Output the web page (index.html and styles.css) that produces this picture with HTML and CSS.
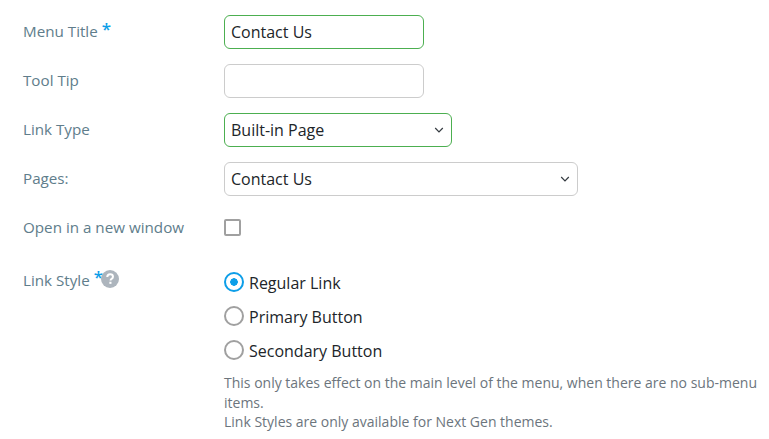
FILE: index.html
```html
<!DOCTYPE html>
<html lang="en">
<head>
    <meta charset="UTF-8">
    <title>Menu Item</title>
    <link rel="stylesheet" href="styles.css">
</head>
<body>
    <form class="menu-form">
        <div class="form-row">
            <label class="field-label">Menu Title <span class="required">*</span></label>
            <div class="text-input valid input-short">Contact Us</div>
        </div>
        <div class="form-row">
            <label class="field-label">Tool Tip</label>
            <div class="text-input input-short"></div>
        </div>
        <div class="form-row">
            <label class="field-label">Link Type</label>
            <div class="text-input valid select-box input-medium">
                Built-in Page
                <svg class="chevron" width="10" height="6" viewBox="0 0 10 6"><path d="M1.2 1l3.8 3.8L8.8 1" fill="none" stroke="#343a40" stroke-width="1.2"/></svg>
            </div>
        </div>
        <div class="form-row">
            <label class="field-label">Pages:</label>
            <div class="text-input select-box input-long">
                Contact Us
                <svg class="chevron" width="10" height="6" viewBox="0 0 10 6"><path d="M1.2 1l3.8 3.8L8.8 1" fill="none" stroke="#343a40" stroke-width="1.2"/></svg>
            </div>
        </div>
        <div class="form-row checkbox-row">
            <label class="field-label">Open in a new window</label>
            <span class="checkbox"></span>
        </div>
        <div class="form-row style-row">
            <label class="field-label">Link Style <span class="required required-tight">*</span><svg class="help-icon" width="18" height="18" viewBox="0 0 17 17"><circle cx="8.5" cy="8.5" r="8.5" fill="#adb5bd"/><path d="M5.9 6.6c.1-1.6 1.2-2.5 2.7-2.5s2.7.9 2.7 2.2c0 1-.5 1.5-1.3 2-.7.5-1 .8-1 1.6" fill="none" stroke="#fff" stroke-width="1.9"/><rect x="7.9" y="11.1" width="2" height="2" fill="#fff"/></svg></label>
            <div class="radio-group">
                <div class="radio-option"><span class="radio checked"></span>Regular Link</div>
                <div class="radio-option"><span class="radio"></span>Primary Button</div>
                <div class="radio-option"><span class="radio"></span>Secondary Button</div>
                <p class="help-text">This only takes effect on the main level of the menu, when there are no sub-menu items.<br>Link Styles are only available for Next Gen themes.</p>
            </div>
        </div>
    </form>
</body>
</html>
```

FILE: styles.css
```css
html, body {
    height: 100%;
    overflow: hidden;
}

body {
    margin: 0;
    background-color: #fff;
    font-family: "Open Sans", sans-serif;
    font-size: 16px;
    color: #212529;
}

.menu-form {
    padding: 15px 0 0 23px;
}

.form-row {
    display: flex;
    align-items: flex-start;
    margin-bottom: 15px;
}

.field-label {
    width: 201px;
    flex-shrink: 0;
    font-size: 15.2px;
    line-height: 33px;
    color: #607d8b;
}

.required {
    color: #0d9ee8;
    font-size: 17px;
    font-weight: 600;
    line-height: 1;
    vertical-align: 2px;
}

.required-tight {
    margin-left: 0;
    margin-right: -2px;
    vertical-align: 3px;
}

.text-input {
    box-sizing: border-box;
    height: 34px;
    padding: 0 6px;
    border: 1px solid #ccc;
    border-radius: 6px;
    line-height: 32px;
}

.valid {
    border-color: #4caf50;
}

.input-short {
    width: 200px;
}

.input-medium {
    width: 228px;
}

.input-long {
    width: 354px;
}

.select-box {
    display: flex;
    align-items: center;
    justify-content: space-between;
}

.chevron {
    margin-right: 1px;
}

.checkbox-row {
    height: 34px;
    margin-bottom: 21px;
}

.checkbox {
    box-sizing: border-box;
    width: 17px;
    height: 17px;
    margin-top: 8px;
    border: 2px solid #a0a0a0;
    border-radius: 2px;
}

.style-row {
    margin-bottom: 0;
}

.style-row .field-label {
    line-height: 28px;
}

.help-icon {
    vertical-align: -2px;
}

.radio-group {
    flex: 1;
    margin-right: 8px;
}

.radio-option {
    display: flex;
    align-items: center;
    gap: 5px;
    height: 34px;
}

.radio {
    box-sizing: border-box;
    width: 20px;
    height: 20px;
    margin-top: -2px;
    border: 2px solid #a0a0a0;
    border-radius: 50%;
}

.radio.checked {
    border-color: #0d9ee8;
    background: radial-gradient(circle, #0d9ee8 0 3.5px, #fff 4px);
}

.help-text {
    margin: 5px 0 0;
    font-size: 14px;
    line-height: 19.5px;
    color: #6c757d;
}
```
